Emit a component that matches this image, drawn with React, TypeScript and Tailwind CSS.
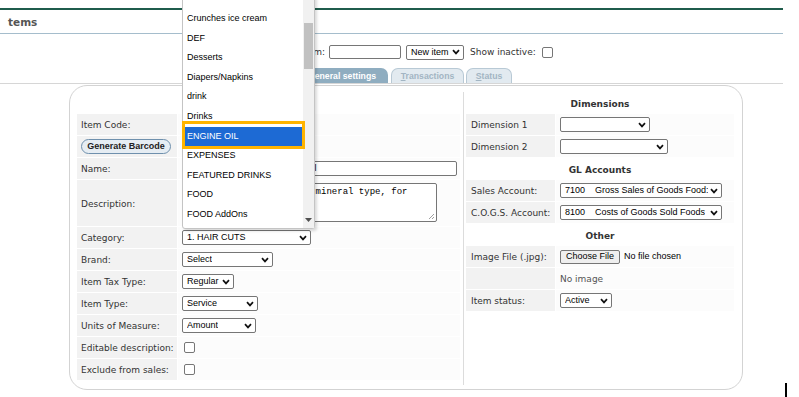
import React from "react"

const LABEL = "font-['DejaVu_Sans',sans-serif] text-[9px] text-[#333]"
const CTRL = "font-['Liberation_Sans',Arial,sans-serif] text-[9px] text-black"

const categories = [
  "Crunches ice cream",
  "DEF",
  "Desserts",
  "Diapers/Napkins",
  "drink",
  "Drinks",
  "ENGINE OIL",
  "EXPENSES",
  "FEATURED DRINKS",
  "FOOD",
  "FOOD AddOns",
]

const Chevron = () => (
  <svg width="8" height="6" viewBox="0 0 8 6" className="shrink-0">
    <path d="M1 1.2 L4 4.4 L7 1.2" fill="none" stroke="#111" strokeWidth="1.7" />
  </svg>
)

const Select = ({ w, text }: { w: string; text: string }) => (
  <div className={`${w} h-[15px] flex items-center justify-between gap-[2px] border border-[#767676] rounded-[2px] bg-white pl-[4px] pr-[3px] ${CTRL}`}>
    <span className="whitespace-pre overflow-hidden leading-[13px]">{text}</span>
    <Chevron />
  </div>
)

const Check = () => <div className="w-[11px] h-[11px] border border-[#767676] rounded-[2px] bg-white ml-[2px]" />

// left table row
const LRow = ({ label, h = "h-[21px]", children }: { label?: React.ReactNode; h?: string; children?: React.ReactNode }) => (
  <div className={`flex ${h}`}>
    <div className={`w-[100px] bg-[#f2f2f2] flex items-center pl-[4px] pt-[3px] ${LABEL}`}>{label}</div>
    <div className="flex-1 ml-[1px] bg-[#fcfcfc] flex items-center pl-[4px]">{children}</div>
  </div>
)

// right table row
const RRow = ({ label, children }: { label?: string; children?: React.ReactNode }) => (
  <div className="flex h-[21px]">
    <div className={`w-[89px] bg-[#f2f2f2] flex items-center pl-[5px] pt-[3px] ${LABEL}`}>{label}</div>
    <div className="flex-1 ml-[1px] bg-[#fcfcfc] flex items-center pl-[4px]">{children}</div>
  </div>
)

const Header = ({ text }: { text: string }) => (
  <div className={`h-[21px] bg-white flex items-center justify-center pt-[4px] font-bold ${LABEL} text-[#222]`}>{text}</div>
)

export default function App() {
  return (
    <div className="w-[799px] h-[397px] relative overflow-hidden bg-white">
      {/* page title */}
      <div className="w-[783px]">
        <div className="h-[8px]" />
        <div className="h-[2px] bg-[#1f5c4c]" />
        <div className="h-[23px] flex items-center pl-[8px] pt-[3px] font-['DejaVu_Sans',sans-serif] text-[10.5px] font-bold text-[#555]">tems</div>
        <div className="h-[1px] bg-[#a5bdcc]" />
      </div>

      {/* toolbar */}
      <div className="mt-[11px] h-[14px] flex items-center pl-[180px]">
        <div className={`w-[145px] text-right pt-[2px] ${LABEL}`}>Select an item:</div>
        <div className="ml-[4px] w-[72px] h-[14px] border border-[#767676] rounded-[2px] bg-white" />
        <div className="ml-[5px]">
          <Select w="w-[58px]" text="New item" />
        </div>
        <div className={`ml-[6px] pt-[2px] ${LABEL}`}>Show inactive:</div>
        <div className="ml-[4px]">
          <Check />
        </div>
      </div>

      {/* tabs */}
      <div className="mt-[9px] h-[16px] w-[783px] border-b border-[#d6d6d6] flex items-end pl-[296px] font-['Liberation_Sans',Arial,sans-serif] text-[8.7px] font-bold">
        <div className="w-[92px] h-[15px] pt-[2px] rounded-t-[7px] bg-[#8fadc0] text-white flex items-center justify-center">
          <span><span className="underline">G</span>eneral settings</span>
        </div>
        <div className="ml-[3px] w-[73px] h-[15px] pt-[2px] rounded-t-[7px] border border-b-0 border-[#b8c9d5] bg-[#e2eaf0] text-[#a2b5c3] flex items-center justify-center">
          <span><span className="underline">T</span>ransactions</span>
        </div>
        <div className="ml-[2px] w-[46px] h-[15px] pt-[2px] rounded-t-[7px] border border-b-0 border-[#b8c9d5] bg-[#e2eaf0] text-[#a2b5c3] flex items-center justify-center">
          <span><span className="underline">S</span>tatus</span>
        </div>
      </div>

      {/* main panel */}
      <div className="mt-[1px] ml-[69px] w-[674px] h-[305px] border border-[#d3d3d3] rounded-[18px] pt-[6px] pb-[4px] pl-[7px] flex items-stretch">
        <div className="w-[383px] flex flex-col gap-[1px]">
          <div className="h-[21px] bg-white" />
          <LRow label="Item Code:">
            <div className="w-[130px] h-[15px] border border-[#767676] rounded-[2px] bg-white" />
          </LRow>
          <div className="flex h-[21px]">
            <div className="w-[100px] bg-[#f2f2f2] flex items-center pl-[4px]">
              <div className="w-[90px] h-[15px] rounded-full border border-[#6f90ad] bg-[#e6edf3] flex items-center justify-center font-['Liberation_Sans',Arial,sans-serif] text-[9px] font-bold text-[#222]">
                Generate Barcode
              </div>
            </div>
            <div className="flex-1 ml-[1px] bg-[#fcfcfc]" />
          </div>
          <LRow label="Name:">
            <div className={`w-[275px] h-[15px] border border-[#767676] rounded-[2px] bg-white flex items-center pl-[6px] whitespace-pre ${CTRL}`}>
              Castrol GTX 20W-50 Engine Oil
            </div>
          </LRow>
          <LRow label="Description:" h="h-[46px]">
            <div className="self-start mt-[3px] w-[255px] h-[39px] border border-[#767676] rounded-[2px] bg-white relative pl-[3px] pt-[3px] font-['Liberation_Mono',monospace] text-[9px] text-black whitespace-pre leading-[11px]">
              Premium engine oil of a mineral type, for
              <svg width="7" height="7" viewBox="0 0 7 7" className="absolute right-[1px] bottom-[1px]">
                <path d="M6 1 L1 6 M6 4 L4 6" stroke="#888" strokeWidth="0.8" />
              </svg>
            </div>
          </LRow>
          <LRow label="Category:">
            <Select w="w-[129px]" text="1. HAIR CUTS" />
          </LRow>
          <LRow label="Brand:">
            <Select w="w-[91px]" text="Select" />
          </LRow>
          <LRow label="Item Tax Type:">
            <Select w="w-[52px]" text="Regular" />
          </LRow>
          <LRow label="Item Type:">
            <Select w="w-[76px]" text="Service" />
          </LRow>
          <LRow label="Units of Measure:">
            <Select w="w-[74px]" text="Amount" />
          </LRow>
          <LRow label="Editable description:">
            <Check />
          </LRow>
          <LRow label="Exclude from sales:">
            <Check />
          </LRow>
        </div>

        <div className="ml-[3px] pl-[2px] border-l border-[#dcdcdc]">
          <div className="w-[268px] flex flex-col gap-[1px]">
            <Header text="Dimensions" />
            <RRow label="Dimension 1">
              <Select w="w-[90px]" text="" />
            </RRow>
            <RRow label="Dimension 2">
              <Select w="w-[108px]" text="" />
            </RRow>
            <Header text="GL Accounts" />
            <RRow label="Sales Account:">
              <Select w="w-[162px]" text="7100    Gross Sales of Goods Food:" />
            </RRow>
            <RRow label="C.O.G.S. Account:">
              <Select w="w-[162px]" text="8100    Costs of Goods Sold Foods" />
            </RRow>
            <Header text="Other" />
            <RRow label="Image File (.jpg):">
              <div className={`h-[14px] px-[5px] flex items-center border border-[#767676] rounded-[2px] bg-[#efefef] ${CTRL}`}>Choose File</div>
              <span className={`ml-[4px] ${CTRL} text-[#333]`}>No file chosen</span>
            </RRow>
            <RRow>
              <span className={`pt-[3px] ${LABEL} text-[#555]`}>No image</span>
            </RRow>
            <RRow label="Item status:">
              <Select w="w-[52px]" text="Active" />
            </RRow>
          </div>
        </div>
      </div>

      {/* open category list */}
      <div className="absolute left-[182px] top-[-4px] w-[133px] h-[233px] bg-white border border-[#c4c4c4] rounded-b-[3px] shadow-[2px_2px_3px_rgba(0,0,0,0.15)] flex">
        <div className={`flex-1 pt-[12px] ${CTRL} text-[9.2px]`}>
          {categories.map((c) => (
            <div
              key={c}
              className={
                c === "ENGINE OIL"
                  ? "h-[19.6px] ml-[2px] mr-[1px] pl-[2px] flex items-center bg-[#1d6ad4] text-white"
                  : "h-[19.6px] pl-[4px] flex items-center"
              }
            >
              {c}
            </div>
          ))}
        </div>
        <div className="w-[11px] bg-[#f1f1f1] relative">
          <div className="absolute left-[1px] right-[1px] top-[26px] h-[46px] bg-[#c1c1c1]" />
          <svg width="7" height="4" viewBox="0 0 7 4" className="absolute left-[2px] bottom-[6px]">
            <path d="M0 0 L7 0 L3.5 4 Z" fill="#505050" />
          </svg>
        </div>
      </div>

      {/* highlight frame */}
      <div className="absolute left-[182px] top-[121px] w-[123px] h-[28px] border-[3px] border-[#ffb400]" />

      {/* text caret */}
      <div className="absolute left-[785px] top-[383px] w-[2px] h-[14px] bg-black" />
    </div>
  )
}
